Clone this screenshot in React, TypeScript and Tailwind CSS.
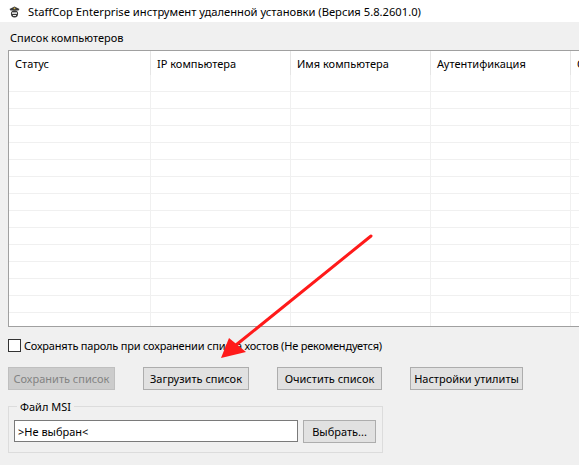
import type { JSX } from "react";

const columns = ["Статус", "IP компьютера", "Имя компьютера", "Аутентификация", "Описание"];
const colWidths = ["w-[142px]", "w-[140px]", "w-[140px]", "w-[140px]", "w-[140px]"];
const rows = Array.from({ length: 15 }, (_, i) => i);

function CopIcon(): JSX.Element {
	return (
		<svg width="13" height="13" viewBox="0 0 13 13">
			<path d="M1.5 4 L6.5 1.5 L11.5 4 L10.5 5.5 L2.5 5.5 Z" fill="#3a3a3a" />
			<rect x="5.7" y="2.6" width="1.6" height="1.6" fill="#d9b84a" />
			<circle cx="6.5" cy="8.8" r="3.6" fill="#3a3a3a" />
			<rect x="4" y="7.4" width="5" height="1.4" fill="#ffffff" />
			<rect x="5" y="10" width="3" height="0.9" fill="#ffffff" />
		</svg>
	);
}

function Button({ label, width, disabled }: { label: string; width: string; disabled?: boolean }): JSX.Element {
	return (
		<div
			className={
				disabled ?
					`${width} flex h-[23px] shrink-0 items-center justify-center whitespace-nowrap border border-[#bfbfbf] bg-[#cccccc] text-[#838383]`
				:	`${width} flex h-[23px] shrink-0 items-center justify-center whitespace-nowrap border border-[#adadad] bg-[#e1e1e1] text-black`
			}
		>
			{label}
		</div>
	);
}

export default function App(): JSX.Element {
	return (
		<div
			className="relative h-[465px] w-[579px] overflow-hidden bg-[#f0f0f0] text-[11px] leading-[15px] text-black"
			style={{ fontFamily: '"Noto Sans", "DejaVu Sans", sans-serif' }}
		>
			<div className="flex h-[22px] items-center gap-[7px] bg-white pl-[8px] text-[11.2px]">
				<CopIcon />
				<span>StaffCop Enterprise инструмент удаленной установки (Версия 5.8.2601.0)</span>
			</div>

			<div className="pl-[10px] pt-[8px]">Список компьютеров</div>

			<div className="ml-[8px] mt-[5px] h-[277px] w-[620px] overflow-hidden border border-[#a0a0a0] bg-white">
				<div className="flex h-[24px]">
					{columns.map((c, i) => (
						<div
							className={`${colWidths[i]} flex shrink-0 items-center whitespace-nowrap border-r border-[#e5e5e5] pl-[6px]`}
							key={c}
						>
							{c}
						</div>
					))}
				</div>
				{rows.map((r) => (
					<div className="flex h-[17px] border-b border-[#f0f0f0]" key={r}>
						{colWidths.map((w, i) => (
							<div className={`${w} shrink-0 border-r border-[#f0f0f0]`} key={i} />
						))}
					</div>
				))}
			</div>

			<div className="ml-[8px] mt-[11px] flex items-center gap-[3px]">
				<div className="h-[13px] w-[13px] border border-[#333333] bg-white" />
				<span className="tracking-[-0.2px]">Сохранять пароль при сохранении списка хостов (Не рекомендуется)</span>
			</div>

			<div className="ml-[8px] mt-[14px] flex gap-[28px]">
				<Button label="Сохранить список" width="w-[107px]" disabled />
				<Button label="Загрузить список" width="w-[106px]" />
				<Button label="Очистить список" width="w-[105px]" />
				<Button label="Настройки утилиты" width="w-[113px]" />
			</div>

			<fieldset className="ml-[8px] mt-[9px] w-[375px] border border-[#dcdcdc] pb-[9px] pl-[5px] pr-[6px]">
				<legend className="ml-[3px] px-[3px]">Файл MSI</legend>
				<div className="mt-[6px] flex gap-[5px]">
					<div className="flex h-[22px] w-[284px] items-center border border-[#7a7a7a] bg-white pl-[3px]">
						&gt;Не выбран&lt;
					</div>
					<Button label="Выбрать..." width="w-[73px]" />
				</div>
			</fieldset>

			<svg className="pointer-events-none absolute left-0 top-0" width="579" height="465" viewBox="0 0 579 465">
				<line x1="371" y1="236" x2="236" y2="345" stroke="#ff1a1a" strokeWidth="3" strokeLinecap="round" />
				<polygon points="221,358 229,338 246,352" fill="#ff1a1a" />
			</svg>
		</div>
	);
}
